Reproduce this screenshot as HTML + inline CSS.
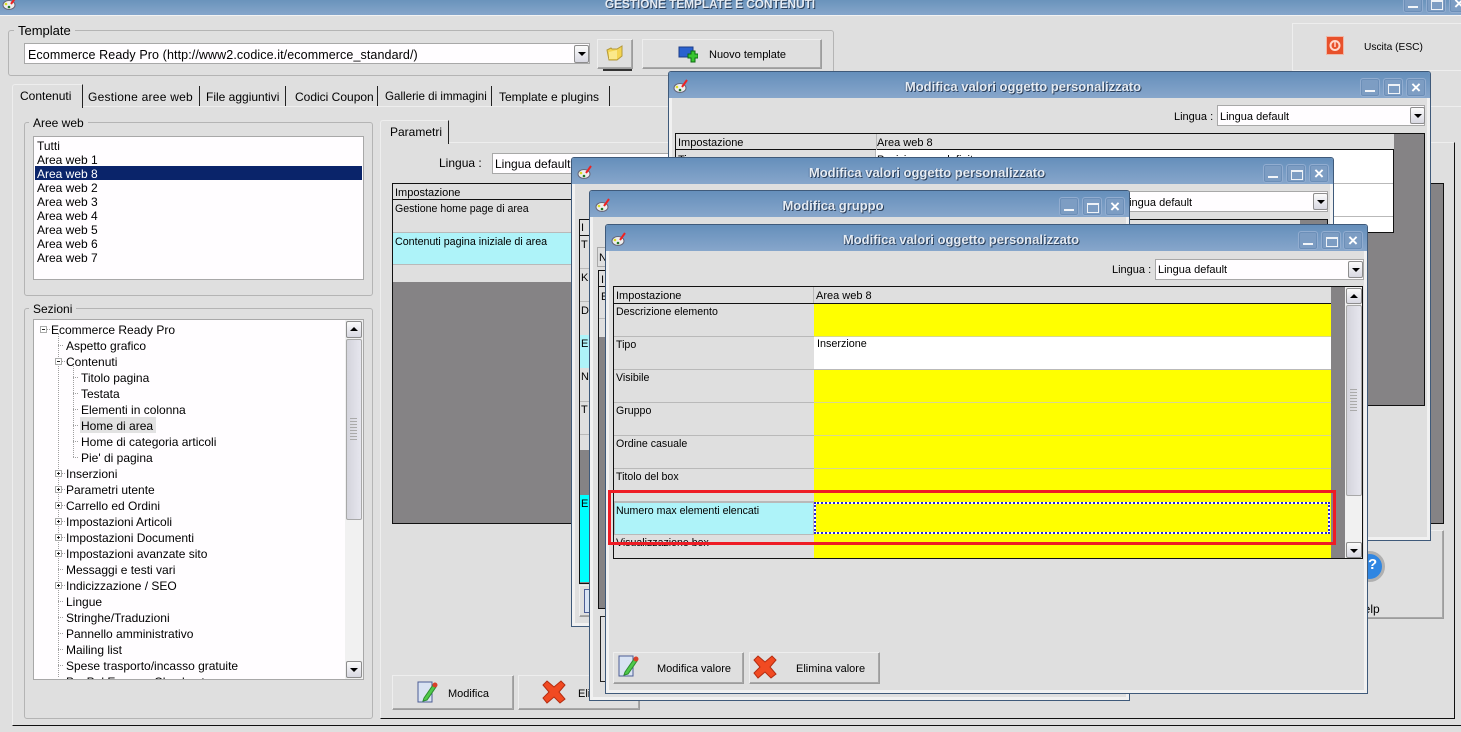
<!DOCTYPE html>
<html lang="it"><head><meta charset="utf-8"><title>Gestione template e contenuti</title>
<style>
html,body{margin:0;padding:0;background:#dfdfdf}
body{position:relative;width:1461px;height:732px;overflow:hidden;font:12px "Liberation Sans",sans-serif;color:#000}
div,span,svg{position:absolute;box-sizing:border-box}
.t{white-space:nowrap;line-height:14px;height:14px;margin-top:1px}
.gb{border:1px solid #b4b4b4;border-radius:3px}
.lg{background:#dfdfdf;padding:0 4px;white-space:nowrap;line-height:14px;height:14px}
.btn{background:#dfdfdf;border:1px solid;border-color:#eeeeee #9c9c9c #9c9c9c #eeeeee;box-shadow:inset -1px -1px 0 #a8a8a8}
.inp{background:#fffdff;border:1px solid #a8a8a8;white-space:nowrap;line-height:18px;padding-left:3px;overflow:hidden}
.ar{width:15px;background:linear-gradient(#fbfbfb,#d8d8e2);border:1px solid #8d8d8d;border-radius:2px}
.ar:after{content:"";position:absolute;left:3px;top:6px;border:4px solid transparent;border-top:4px solid #000;border-bottom:0}
.up:after{top:5px;border-top:0;border-bottom:4px solid #000}
.win{background:#dfdfdf;border:1px solid #3f5a7a;box-shadow:inset 3px 0 0 #f1f1f1,inset -3px 0 0 #f1f1f1,inset 0 -3px 0 #f1f1f1;border-radius:3px 3px 0 0}
.tb{left:0;top:0;right:0;height:26px;background:linear-gradient(#658fbb,#87a6cb);border-radius:2px 2px 0 0}
.ti{left:0;right:53px;top:7px;text-align:center;font-weight:bold;font-size:13px;line-height:16px;height:16px;color:#e6ecf3;text-shadow:1px 1px 0 #2b3f5a,-1px 0 0 #5a7da6;white-space:nowrap}
.cb{width:20px;height:19px;background:#7d9dc3;border:1px solid #92add0;border-radius:3px;box-shadow:0 0 0 1px #6c8fb8 inset}
.mi:after{content:"";position:absolute;left:4px;top:11px;width:10px;height:2px;background:#f2f5f9}
.ma:after{content:"";position:absolute;left:4px;top:5px;width:10px;height:7px;border:1px solid #eef2f7;border-top:2px solid #eef2f7}
.cl:after{content:"\00d7";position:absolute;left:0;width:18px;top:0;text-align:center;font:bold 17px/17px "Liberation Sans",sans-serif;color:#fff}
.cell{border-bottom:1px solid #b9b9b9;padding:0 2px;font-size:10.6px;line-height:14px;white-space:nowrap;overflow:hidden}
.ln{height:1px;background:#b9b9b9}
</style></head><body>

<!-- main title -->
<div style="left:0;top:0;width:1461px;height:15px;background:linear-gradient(#6a93bb,#86a6cb)"></div>
<div style="left:0;top:15px;width:1461px;height:1px;background:#f3f3f3"></div>
<svg style="left:2px;top:-5px" width="16" height="16" viewBox="0 0 16 16"><ellipse cx="7" cy="10" rx="6" ry="4.5" fill="#eee" stroke="#667"/><path d="M9 9l5-7" stroke="#e22" stroke-width="2"/><circle cx="4" cy="9" r="1.3" fill="#dd2"/><circle cx="7" cy="12" r="1.3" fill="#272"/></svg>
<div class="t" style="left:560px;width:300px;top:-4px;text-align:center;font-weight:bold;color:#e6ecf3;text-shadow:1px 1px 0 #2b3f5a;font-size:11.8px">GESTIONE TEMPLATE E CONTENUTI</div>
<div class="cb mi" style="left:1403px;top:-6px"></div>
<div class="cb ma" style="left:1426px;top:-6px"></div>
<div class="cb cl" style="left:1449px;top:-6px"></div>

<!-- Template group -->
<div class="gb" style="left:8px;top:30px;width:826px;height:46px"></div>
<div class="lg" style="left:14px;top:24px;font-size:13px">Template</div>
<div class="inp" style="left:24px;top:43px;width:566px;height:21px"><span class="t" style="left:3px;top:3px;font-size:12.5px;letter-spacing:.1px">Ecommerce Ready Pro (http://www2.codice.it/ecommerce_standard/)</span></div>
<div class="ar" style="left:574px;top:45px;height:18px"></div>
<div class="btn" style="left:597px;top:39px;width:36px;height:30px"></div>
<svg style="left:606px;top:44px" width="18" height="18" viewBox="0 0 18 18"><path d="M1 6l4-2 1 1h5l5-3v10l-5 4H3z" fill="#f4d552" stroke="#b59a3a"/><path d="M3 8l8-2v9H3z" fill="#fbe98a"/></svg>
<div style="left:603px;top:69px;width:29px;height:2px;background:#333"></div>
<div class="btn" style="left:642px;top:39px;width:180px;height:30px"></div>
<svg style="left:678px;top:46px" width="20" height="17" viewBox="0 0 20 17"><rect x="1" y="1" width="14" height="10" fill="#2a62cf" stroke="#1c3d8a"/><path d="M10 8h3V5h4v3h3v4h-3v4h-4v-4h-3z" fill="#39c630" stroke="#0d6c12"/></svg>
<div class="t" style="left:709px;top:47px;font-size:11px">Nuovo template</div>

<!-- Exit -->
<div style="left:1292px;top:23px;width:169px;height:48px;background:#dfdfdf;border:1px solid #eeeeee;border-right:0"></div>
<svg style="left:1326px;top:36px" width="18" height="19" viewBox="0 0 18 19"><rect x="0.5" y="0.5" width="17" height="18" fill="#e8512b" stroke="#f0b8a8"/><circle cx="9" cy="9.500" r="4.500" fill="none" stroke="#ffd9cc" stroke-width="2"/><path d="M9 6v5" stroke="#ffd9cc" stroke-width="1.500"/></svg>
<div class="t" style="left:1364px;top:40px;font-size:10.2px">Uscita (ESC)</div>

<!-- outer tab panel -->
<div style="left:12px;top:106px;width:1449px;height:620px;border-left:1px solid #eeeeee;border-top:1px solid #eeeeee;border-bottom:1px solid #111"></div>
<div style="left:12px;top:84px;width:71px;height:24px;background:#dfdfdf;border:1px solid #eeeeee;border-bottom:0;border-right:1px solid #222;border-radius:3px 0 0 0"></div>
<div class="t" style="left:20px;top:88px">Contenuti</div>
<div style="left:199px;top:86px;width:1px;height:20px;background:#222"></div>
<div class="t" style="left:88px;top:89px;letter-spacing:.25px">Gestione aree web</div>
<div style="left:285px;top:86px;width:1px;height:20px;background:#222"></div>
<div class="t" style="left:206px;top:89px">File aggiuntivi</div>
<div style="left:377px;top:86px;width:1px;height:20px;background:#222"></div>
<div class="t" style="left:295px;top:89px">Codici Coupon</div>
<div style="left:491px;top:86px;width:1px;height:20px;background:#222"></div>
<div class="t" style="left:385px;top:89px;font-size:11.6px">Gallerie di immagini</div>
<div style="left:609px;top:86px;width:1px;height:20px;background:#222"></div>
<div class="t" style="left:499px;top:89px">Template e plugins</div>

<!-- Aree web -->
<div class="gb" style="left:24px;top:122px;width:349px;height:174px"></div>
<div class="lg" style="left:29px;top:116px">Aree web</div>
<div style="left:33px;top:136px;width:331px;height:144px;background:#fffdff;border:1px solid #a8a8a8"></div>
<div style="left:35px;top:166px;width:327px;height:14px;background:#0a246a"></div>
<div class="t" style="left:37px;top:138px">Tutti</div>
<div class="t" style="left:37px;top:152px">Area web 1</div>
<div class="t" style="left:37px;top:166px;color:#fff">Area web 8</div>
<div class="t" style="left:37px;top:180px">Area web 2</div>
<div class="t" style="left:37px;top:194px">Area web 3</div>
<div class="t" style="left:37px;top:208px">Area web 4</div>
<div class="t" style="left:37px;top:222px">Area web 5</div>
<div class="t" style="left:37px;top:236px">Area web 6</div>
<div class="t" style="left:37px;top:250px">Area web 7</div>

<!-- Sezioni -->
<div class="gb" style="left:24px;top:308px;width:349px;height:411px"></div>
<div class="lg" style="left:29px;top:302px">Sezioni</div>
<div style="left:33px;top:319px;width:331px;height:361px;background:#fffdff;border:1px solid #a8a8a8;overflow:hidden"></div>
<svg style="left:34px;top:320px" width="60" height="358" viewBox="0 0 60 358" fill="none" shape-rendering="crispEdges">
<g stroke="#a0a0a0" stroke-dasharray="1 1"><path d="M24.500 14V358M39.500 46V137M13 9.500h3M24 25.500h6M24 345.500h6M39 57.500h6M39 73.500h6M39 89.500h6M39 105.500h6M39 121.500h6M39 137.500h6M28 41.500h3M28 153.500h3M28 169.500h3M28 185.500h3M28 201.500h3M28 217.500h3M28 233.500h3M28 265.500h3M24 249.500h6M24 281.500h6M24 297.500h6M24 313.500h6M24 329.500h6"/></g>
<g stroke="#aaa" fill="#fff"><rect x="6.500" y="6.500" width="6" height="6"/><rect x="21.500" y="38.500" width="6" height="6"/><rect x="21.500" y="150.500" width="6" height="6"/><rect x="21.500" y="166.500" width="6" height="6"/><rect x="21.500" y="182.500" width="6" height="6"/><rect x="21.500" y="198.500" width="6" height="6"/><rect x="21.500" y="214.500" width="6" height="6"/><rect x="21.500" y="230.500" width="6" height="6"/><rect x="21.500" y="262.500" width="6" height="6"/></g>
<path stroke="#222" d="M8 9.500h3M23 41.500h3M23 153.500h3M24.500 152v3M23 169.500h3M24.500 168v3M23 185.500h3M24.500 184v3M23 201.500h3M24.500 200v3M23 217.500h3M24.500 216v3M23 233.500h3M24.500 232v3M23 265.500h3M24.500 264v3"/></svg>
<div style="left:80px;top:417px;width:76px;height:16px;background:#e2e2e2"></div>
<div class="t" style="left:51px;top:322px">Ecommerce Ready Pro</div>
<div class="t" style="left:66px;top:338px">Aspetto grafico</div>
<div class="t" style="left:66px;top:354px">Contenuti</div>
<div class="t" style="left:81px;top:370px">Titolo pagina</div>
<div class="t" style="left:81px;top:386px">Testata</div>
<div class="t" style="left:81px;top:402px">Elementi in colonna</div>
<div class="t" style="left:81px;top:418px">Home di area</div>
<div class="t" style="left:81px;top:434px">Home di categoria articoli</div>
<div class="t" style="left:81px;top:450px">Pie' di pagina</div>
<div class="t" style="left:66px;top:466px">Inserzioni</div>
<div class="t" style="left:66px;top:482px">Parametri utente</div>
<div class="t" style="left:66px;top:498px">Carrello ed Ordini</div>
<div class="t" style="left:66px;top:514px">Impostazioni Articoli</div>
<div class="t" style="left:66px;top:530px">Impostazioni Documenti</div>
<div class="t" style="left:66px;top:546px">Impostazioni avanzate sito</div>
<div class="t" style="left:66px;top:562px">Messaggi e testi vari</div>
<div class="t" style="left:66px;top:578px">Indicizzazione / SEO</div>
<div class="t" style="left:66px;top:594px">Lingue</div>
<div class="t" style="left:66px;top:610px">Stringhe/Traduzioni</div>
<div class="t" style="left:66px;top:626px">Pannello amministrativo</div>
<div class="t" style="left:66px;top:642px">Mailing list</div>
<div class="t" style="left:66px;top:658px">Spese trasporto/incasso gratuite</div>
<div style="left:66px;top:675px;width:200px;height:4px;overflow:hidden"><span class="t" style="left:0;top:-1px">PayPal Express Checkout</span></div>
<div style="left:345px;top:320px;width:18px;height:359px;background:#f1f1f1"></div>
<div class="ar up" style="left:346px;top:321px;width:16px;height:17px"></div>
<div style="left:346px;top:339px;width:16px;height:181px;background:linear-gradient(90deg,#d4d4dc,#e6e6ee);border:1px solid #a8a8a8;border-radius:2px"></div>
<div style="left:350px;top:418px;width:7px;height:22px;background:repeating-linear-gradient(#aaa 0 1px,transparent 1px 3px)"></div>
<div class="ar" style="left:346px;top:661px;width:16px;height:17px"></div>

<!-- Parametri panel -->
<div style="left:380px;top:142px;width:1075px;height:577px;border-left:1px solid #eeeeee;border-top:1px solid #eeeeee;border-right:1px solid #111;border-bottom:1px solid #111"></div>
<div style="left:380px;top:120px;width:69px;height:24px;background:#dfdfdf;border:1px solid #eeeeee;border-bottom:0;border-right:1px solid #222;border-radius:3px 0 0 0"></div>
<div class="t" style="left:390px;top:124px">Parametri</div>
<div class="t" style="left:439px;top:155px">Lingua :</div>
<div class="inp" style="left:492px;top:153px;width:200px;height:21px"><span class="t" style="left:2px;top:2px">Lingua default</span></div>
<div style="left:392px;top:183px;width:1052px;height:341px;background:#858385;border:1px solid #111"></div>
<div style="left:393px;top:184px;width:1000px;height:98px;background:#dfdfdf"></div>
<div style="left:393px;top:199px;width:1000px;height:1px;background:#111"></div>
<div style="left:393px;top:232px;width:1000px;height:1px;background:#b9b9b9"></div>
<div style="left:393px;top:233px;width:1000px;height:32px;background:#aef3f9;border-bottom:1px solid #b9b9b9"></div>
<div class="t" style="left:395px;top:185px;font-size:11px">Impostazione</div>
<div class="t" style="left:395px;top:201px;font-size:10.6px">Gestione home page di area</div>
<div class="t" style="left:395px;top:234px;font-size:10.7px">Contenuti pagina iniziale di area</div>
<div class="btn" style="left:392px;top:675px;width:122px;height:35px"></div>
<svg style="left:417px;top:680px" width="22" height="24" viewBox="0 0 22 24"><path d="M1 2h14v20H1z" fill="#d9e3f3" stroke="#4c5d95"/><path d="M7 18l9-13 3 2-9 13-4 1z" fill="#4fc94a" stroke="#2d8c30"/><circle cx="18" cy="5" r="2.500" fill="#d9402a"/></svg>
<div class="t" style="left:448px;top:686px;font-size:11px">Modifica</div>
<div class="btn" style="left:518px;top:675px;width:122px;height:35px"></div>
<svg style="left:542px;top:680px" width="24" height="24" viewBox="0 0 24 24"><path d="M5 1l7 6 7-6 4 4-6 7 6 7-5 4-6-6-7 6-4-5 6-6-6-7z" fill="#f14a22" stroke="#b42c10"/></svg>
<div class="t" style="left:578px;top:686px;font-size:11px">Elimina</div>

<!-- Help -->
<div class="btn" style="left:1300px;top:530px;width:144px;height:89px"></div>
<div style="left:1354px;top:551px;width:31px;height:31px;border-radius:50%;background:#2f86e2;border:3px solid #b0b0b0"></div>
<div class="t" style="left:1368px;top:557px;color:#fff;font-weight:bold;font-size:15px">?</div>
<div class="t" style="left:1355px;top:601px">Help</div>

<!-- Window 1 -->
<div class="win" style="left:668px;top:71px;width:763px;height:470px"><div class="tb"></div><div class="ti">Modifica valori oggetto personalizzato</div>
<svg style="left:4px;top:6px" width="16" height="16" viewBox="0 0 16 16"><ellipse cx="7" cy="10" rx="6" ry="4.500" fill="#eee" stroke="#667"/><path d="M9 9l5-7" stroke="#e22" stroke-width="2"/><circle cx="4" cy="9" r="1.300" fill="#dd2"/><circle cx="7" cy="12" r="1.300" fill="#272"/></svg>
<div class="cb mi" style="left:691px;top:6px"></div><div class="cb ma" style="left:714px;top:6px"></div><div class="cb cl" style="left:737px;top:6px"></div>
<div class="t" style="left:505px;top:37px;font-size:11px">Lingua :</div>
<div class="inp" style="left:548px;top:33px;width:208px;height:21px"><span class="t" style="left:2px;top:3px;font-size:11px">Lingua default</span></div>
<div class="ar" style="left:741px;top:35px;height:17px"></div>
<div style="left:6px;top:61px;width:750px;height:273px;background:#858385;border:1px solid #111"></div>
<div style="left:7px;top:62px;width:718px;height:16px;background:#dfdfdf;border-bottom:1px solid #111"></div>
<div style="left:7px;top:78px;width:718px;height:83px;background:#fff;border-right:1px solid #111;border-bottom:1px solid #111"></div>
<div style="left:7px;top:78px;width:200px;height:83px;background:#dfdfdf;border-right:1px solid #b9b9b9;border-bottom:1px solid #111"></div>
<div style="left:207px;top:62px;width:1px;height:16px;background:#b9b9b9"></div>
<div style="left:7px;top:111px;width:717px;height:1px;background:#b9b9b9"></div>
<div style="left:7px;top:144px;width:717px;height:1px;background:#b9b9b9"></div>
<div class="t" style="left:9px;top:63px;font-size:11px">Impostazione</div>
<div class="t" style="left:208px;top:63px;font-size:11px">Area web 8</div>
<div class="t" style="left:9px;top:80px;font-size:11px">Tipo</div>
<div class="t" style="left:208px;top:80px;font-size:11px">Posizione predefinita</div>
</div>

<!-- Window 2 -->
<div class="win" style="left:571px;top:157px;width:763px;height:470px"><div class="tb"></div><div class="ti" style="right:51px">Modifica valori oggetto personalizzato</div>
<svg style="left:5px;top:6px" width="16" height="16" viewBox="0 0 16 16"><ellipse cx="7" cy="10" rx="6" ry="4.500" fill="#eee" stroke="#667"/><path d="M9 9l5-7" stroke="#e22" stroke-width="2"/><circle cx="4" cy="9" r="1.300" fill="#dd2"/><circle cx="7" cy="12" r="1.300" fill="#272"/></svg>
<div class="cb mi" style="left:691px;top:6px"></div><div class="cb ma" style="left:714px;top:6px"></div><div class="cb cl" style="left:737px;top:6px"></div>
<div class="inp" style="left:548px;top:33px;width:208px;height:21px"><span class="t" style="left:2px;top:3px;font-size:11px">Lingua default</span></div>
<div class="ar" style="left:741px;top:35px;height:17px"></div>
<div style="left:7px;top:61px;width:749px;height:365px;background:#858385;border:1px solid #111"></div>
<div style="left:8px;top:62px;width:720px;height:230px;background:#dfdfdf"></div>
<div class="ln" style="left:8px;top:77px;width:20px;background:#111"></div>
<div class="ln" style="left:8px;top:110px;width:20px"></div>
<div class="ln" style="left:8px;top:143px;width:20px"></div>
<div style="left:8px;top:177px;width:720px;height:33px;background:#aef3f9"></div>
<div class="ln" style="left:8px;top:243px;width:20px"></div>
<div class="ln" style="left:8px;top:276px;width:20px"></div>
<div style="left:8px;top:337px;width:720px;height:87px;background:#00ffff"></div>
<div class="t" style="left:9px;top:62px;font-size:11px">I</div>
<div class="t" style="left:9px;top:79px;font-size:11px">T</div>
<div class="t" style="left:9px;top:112px;font-size:11px">K</div>
<div class="t" style="left:9px;top:145px;font-size:11px">D</div>
<div class="t" style="left:9px;top:178px;font-size:11px">E</div>
<div class="t" style="left:9px;top:211px;font-size:11px">N</div>
<div class="t" style="left:9px;top:244px;font-size:11px">T</div>
<div class="t" style="left:9px;top:338px;font-size:11px">E</div>
<div class="btn" style="left:7px;top:427px;width:200px;height:32px"></div>
<div style="left:12px;top:431px;width:10px;height:24px;background:#d9e3f3;border:1px solid #4c5d95"></div>
</div>

<!-- Window 3 -->
<div class="win" style="left:589px;top:190px;width:541px;height:511px"><div class="tb"></div><div class="ti">Modifica gruppo</div>
<svg style="left:5px;top:6px" width="16" height="16" viewBox="0 0 16 16"><ellipse cx="7" cy="10" rx="6" ry="4.500" fill="#eee" stroke="#667"/><path d="M9 9l5-7" stroke="#e22" stroke-width="2"/><circle cx="4" cy="9" r="1.300" fill="#dd2"/><circle cx="7" cy="12" r="1.300" fill="#272"/></svg>
<div class="cb mi" style="left:469px;top:6px"></div><div class="cb ma" style="left:492px;top:6px"></div><div class="cb cl" style="left:515px;top:6px"></div>
<div class="inp" style="left:7px;top:56px;width:500px;height:20px;background:#dfdfdf"><span class="t" style="left:1px;top:2px;font-size:11px">N</span></div>
<div style="left:8px;top:79px;width:500px;height:339px;background:#858385;border:1px solid #111"></div>
<div style="left:9px;top:80px;width:490px;height:66px;background:#dfdfdf"></div>
<div class="ln" style="left:9px;top:95px;width:20px;background:#111"></div>
<div class="ln" style="left:9px;top:127px;width:20px"></div>
<div class="t" style="left:11px;top:81px;font-size:11px">I</div>
<div class="t" style="left:11px;top:98px;font-size:11px">E</div>
<div style="left:10px;top:425px;width:500px;height:66px;background:#dfdfdf;border:1px solid #222"></div>
</div>

<!-- Window 4 -->
<div class="win" style="left:605px;top:224px;width:763px;height:470px"><div class="tb"></div><div class="ti" style="right:51px">Modifica valori oggetto personalizzato</div>
<svg style="left:5px;top:6px" width="16" height="16" viewBox="0 0 16 16"><ellipse cx="7" cy="10" rx="6" ry="4.500" fill="#eee" stroke="#667"/><path d="M9 9l5-7" stroke="#e22" stroke-width="2"/><circle cx="4" cy="9" r="1.300" fill="#dd2"/><circle cx="7" cy="12" r="1.300" fill="#272"/></svg>
<div class="cb mi" style="left:692px;top:6px"></div><div class="cb ma" style="left:715px;top:6px"></div><div class="cb cl" style="left:737px;top:6px"></div>
<div class="t" style="left:506px;top:37px;font-size:11px">Lingua :</div>
<div class="inp" style="left:549px;top:34px;width:209px;height:21px"><span class="t" style="left:2px;top:2px;font-size:11px">Lingua default</span></div>
<div class="ar" style="left:742px;top:36px;height:17px"></div>
<!-- grid -->
<div style="left:7px;top:61px;width:750px;height:273px;background:#858385;border:1px solid #111"></div>
<div style="left:8px;top:62px;width:717px;height:17px;background:#dfdfdf;border-bottom:1px solid #111"></div>
<div style="left:207px;top:62px;width:1px;height:16px;background:#b9b9b9"></div>
<div class="t" style="left:10px;top:63px;font-size:11px">Impostazione</div>
<div class="t" style="left:210px;top:63px;font-size:11px">Area web 8</div>
<div style="left:8px;top:79px;width:717px;height:254px;background:#ffff00;overflow:hidden">
<div style="left:0;top:0;width:200px;height:254px;background:#dfdfdf"></div>
<div class="cell" style="left:0;top:0;width:200px;height:33px;padding-top:1px">Descrizione elemento</div>
<div class="cell" style="left:0;top:33px;width:200px;height:33px;padding-top:1px">Tipo</div>
<div style="left:200px;top:33px;width:517px;height:33px;background:#fff;border-bottom:1px solid #b9b9b9"></div>
<div class="t" style="left:203px;top:32px;font-size:10.8px">Inserzione</div>
<div class="cell" style="left:0;top:66px;width:200px;height:33px;padding-top:1px">Visibile</div>
<div class="cell" style="left:0;top:99px;width:200px;height:33px;padding-top:1px">Gruppo</div>
<div class="cell" style="left:0;top:132px;width:200px;height:33px;padding-top:1px">Ordine casuale</div>
<div class="cell" style="left:0;top:165px;width:200px;height:33px;padding-top:1px">Titolo del box</div>
<div class="cell" style="left:0;top:198px;width:200px;height:33px;padding-top:1px;background:#aef3f9;border:1px solid #b9b9b9;padding-left:1px">Numero max elementi elencati</div>
<div class="cell" style="left:0;top:231px;width:200px;height:23px;padding-top:1px;border:0">Visualizzazione box</div>
<div style="left:200px;top:32px;width:517px;height:1px;background:#d8d890"></div>
<div style="left:200px;top:98px;width:517px;height:1px;background:#d8d890"></div>
<div style="left:200px;top:131px;width:517px;height:1px;background:#d8d890"></div>
<div style="left:200px;top:164px;width:517px;height:1px;background:#d8d890"></div>
<div style="left:200px;top:198px;width:516px;height:32px;border:2px dotted #2a2ad0;background:#fff;box-shadow:inset 0 0 0 40px #ffff00"></div>
</div>
<div style="left:739px;top:62px;width:17px;height:271px;background:#f1f1f1"></div>
<div class="ar up" style="left:740px;top:63px;width:16px;height:16px"></div>
<div style="left:740px;top:80px;width:16px;height:191px;background:linear-gradient(90deg,#d4d4dc,#e6e6ee);border:1px solid #a8a8a8;border-radius:2px"></div>
<div style="left:744px;top:164px;width:7px;height:22px;background:repeating-linear-gradient(#aaa 0 1px,transparent 1px 3px)"></div>
<div class="ar" style="left:740px;top:317px;width:16px;height:16px"></div>
<!-- buttons -->
<div class="btn" style="left:7px;top:427px;width:131px;height:32px"></div>
<svg style="left:12px;top:429px" width="22" height="24" viewBox="0 0 22 24"><path d="M1 2h14v20H1z" fill="#d9e3f3" stroke="#4c5d95"/><path d="M7 18l9-13 3 2-9 13-4 1z" fill="#4fc94a" stroke="#2d8c30"/><circle cx="18" cy="5" r="2.500" fill="#d9402a"/></svg>
<div class="t" style="left:51px;top:436px;font-size:11px">Modifica valore</div>
<div class="btn" style="left:143px;top:427px;width:131px;height:32px"></div>
<svg style="left:147px;top:430px" width="24" height="24" viewBox="0 0 24 24"><path d="M5 1l7 6 7-6 4 4-6 7 6 7-5 4-6-6-7 6-4-5 6-6-6-7z" fill="#f14a22" stroke="#b42c10"/></svg>
<div class="t" style="left:190px;top:436px;font-size:11px">Elimina valore</div>
</div>

<!-- red highlight -->
<div style="left:608px;top:490px;width:728px;height:55px;border:3px solid #ee1c25"></div>
</body></html>
